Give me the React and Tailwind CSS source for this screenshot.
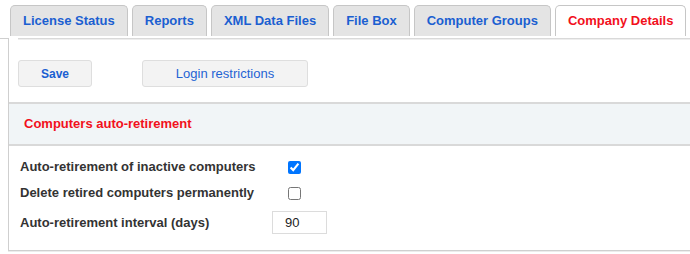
export default function App() {
  const tabs = [
    "License Status",
    "Reports",
    "XML Data Files",
    "File Box",
    "Computer Groups",
    "Company Details",
  ];
  return (
    <div className="w-[690px] h-[254px] overflow-hidden bg-white font-['Liberation_Sans',Arial,sans-serif]">
      <div className="flex h-[38px] items-start gap-[4px] pl-[10px] pt-[5px] overflow-hidden">
        {tabs.map((t, i) => {
          const active = i === tabs.length - 1;
          return (
            <div
              key={t}
              className={
                active
                  ? "shrink-0 h-[31px] flex items-center px-3 border border-b-0 border-[#c6c6c6] rounded-t-[5px] bg-white text-[13px] font-bold text-[#f2101c]"
                  : "shrink-0 h-[31px] flex items-center px-3 border border-b-0 border-[#c6c6c6] rounded-t-[5px] bg-[#e4e4e4] text-[13px] font-bold text-[#1b5fd1]"
              }
            >
              {t}
            </div>
          );
        })}
        <div className="shrink-0 w-[20px] h-[31px] border border-b-0 border-[#c6c6c6] rounded-t-[5px] bg-[#e4e4e4]" />
      </div>
      <div className="flex">
        <div className="w-2 shrink-0 border-t border-[#cfcfcf]" />
        <div className="flex-1 border-l border-b border-[#cfcfcf]">
          <div className="ml-[9px] border-t border-[#d9d9d9]" />
          <div className="ml-[9px] border-t border-[#eeeeee]" />
          <div className="flex items-center pl-[9px] pt-[20px]">
            <div className="w-[74px] h-[27px] flex items-center justify-center bg-[#f3f3f3] border border-[#dedede] rounded-[3px] text-[12px] font-bold text-[#1b5fd1]">
              Save
            </div>
            <div className="ml-[50px] w-[166px] h-[27px] flex items-center justify-center bg-[#f3f3f3] border border-[#dedede] rounded-[3px] text-[13px] text-[#1f63d4]">
              Login restrictions
            </div>
          </div>
          <div className="mt-[15px] h-[44px] flex items-center pl-[15px] bg-[#f1f5f7] border-y-2 border-[#d9d9d9] text-[13px] font-bold text-[#f2101c]">
            Computers auto-retirement
          </div>
          <div className="pl-[11px] pt-[8px] pb-[15px] text-[13px] font-bold text-[#333333]">
            <div className="flex h-[26px] items-center">
              <div className="w-[252px]">Auto-retirement of inactive computers</div>
              <input
                type="checkbox"
                defaultChecked
                className="m-0 ml-[16px] w-[13px] h-[13px]"
              />
            </div>
            <div className="flex h-[26px] items-center">
              <div className="w-[252px]">Delete retired computers permanently</div>
              <input
                type="checkbox"
                className="m-0 ml-[16px] w-[13px] h-[13px]"
              />
            </div>
            <div className="flex mt-[4px] h-[25px] items-center">
              <div className="w-[252px]">Auto-retirement interval (days)</div>
              <input
                type="text"
                readOnly
                value="90"
                className="w-[55px] h-[23px] border border-[#dcdcdc] pl-[12px] text-[13px] font-normal text-[#222222] outline-none"
              />
            </div>
          </div>
        </div>
      </div>
      <div className="ml-2 border-t border-[#ececec]" />
    </div>
  );
}
